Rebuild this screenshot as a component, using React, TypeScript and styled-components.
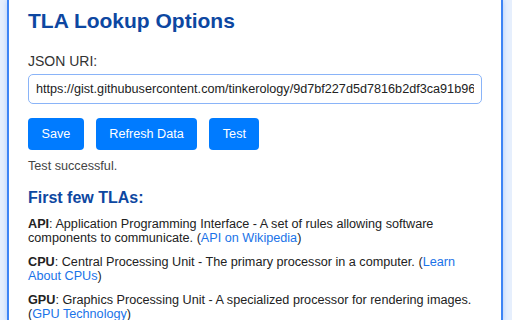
import React from "react";
import styled, { createGlobalStyle } from "styled-components";

const Global = createGlobalStyle`
  html, body { margin: 0; padding: 0; }
  body {
    background: #e6effd;
    font-family: "Liberation Sans", Arial, sans-serif;
    color: #222;
  }
`;

const Page = styled.div`
  padding: 0 9px 0 7px;
  height: 320px;
  overflow: hidden;
`;

const Card = styled.div`
  background: #fff;
  border-left: 2px solid #3d84f5;
  border-right: 2px solid #3d84f5;
  box-shadow: 0 0 5px rgba(61, 132, 245, 0.35);
  min-height: 320px;
  padding: 9px 19px 0 19px;
  box-sizing: border-box;
`;

const Title = styled.h1`
  margin: 0 0 20px;
  font-size: 21px;
  line-height: 24px;
  font-weight: bold;
  color: #0d47a1;
`;

const Label = styled.label`
  display: block;
  font-size: 14px;
  line-height: 16px;
  color: #333;
  margin-bottom: 5px;
`;

const Input = styled.input`
  display: block;
  width: 100%;
  box-sizing: border-box;
  height: 30px;
  padding: 0 7px;
  border: 1px solid #8ab4f8;
  border-radius: 5px;
  font-family: "Liberation Sans", Arial, sans-serif;
  font-size: 12.65px;
  color: #222;
  outline: none;
`;

const Buttons = styled.div`
  display: flex;
  gap: 12px;
  margin-top: 14px;
`;

const Button = styled.button`
  height: 32px;
  padding: 0 13.5px;
  background: #007bff;
  color: #fff;
  border: none;
  border-radius: 4px;
  font-family: "Liberation Sans", Arial, sans-serif;
  font-size: 12.65px;
`;

const Status = styled.div`
  margin-top: 9px;
  font-size: 12.65px;
  line-height: 15px;
  color: #444;
`;

const Subtitle = styled.h2`
  margin: 13.5px 0 10px;
  font-size: 16px;
  line-height: 19px;
  font-weight: bold;
  color: #0d47a1;
`;

const Entry = styled.p`
  margin: 0 0 9px;
  font-size: 12.65px;
  line-height: 14.5px;
  color: #222;
`;

const Link = styled.a`
  color: #1a73e8;
  text-decoration: none;
`;

const tlas = [
  {
    k: "API",
    d: "Application Programming Interface - A set of rules allowing software components to communicate.",
    l: "API on Wikipedia",
  },
  {
    k: "CPU",
    d: "Central Processing Unit - The primary processor in a computer.",
    l: "Learn About CPUs",
  },
  {
    k: "GPU",
    d: "Graphics Processing Unit - A specialized processor for rendering images.",
    l: "GPU Technology",
  },
];

export default function App() {
  return (
    <>
      <Global />
      <Page>
        <Card>
          <Title>TLA Lookup Options</Title>
          <Label>JSON URI:</Label>
          <Input
            readOnly
            value="https://gist.githubusercontent.com/tinkerology/9d7bf227d5d7816b2df3ca91b96e0c3c/raw/tlas.json"
          />
          <Buttons>
            <Button>Save</Button>
            <Button>Refresh Data</Button>
            <Button>Test</Button>
          </Buttons>
          <Status>Test successful.</Status>
          <Subtitle>First few TLAs:</Subtitle>
          {tlas.map((t) => (
            <Entry key={t.k}>
              <b>{t.k}</b>: {t.d} (<Link href="#">{t.l}</Link>)
            </Entry>
          ))}
        </Card>
      </Page>
    </>
  );
}
